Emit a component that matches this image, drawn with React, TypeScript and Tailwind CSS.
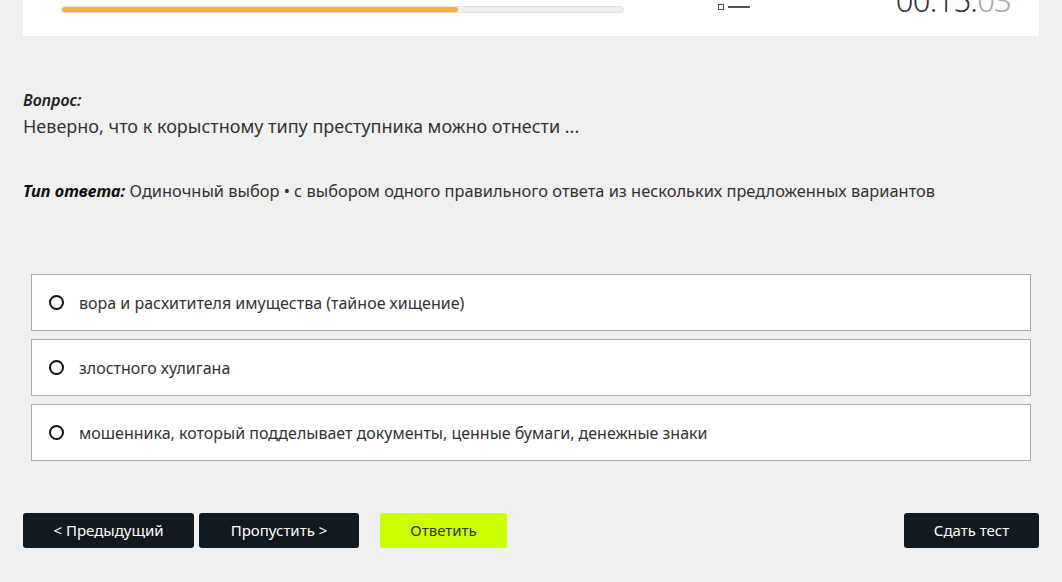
import React, { useState } from 'react';

const options = [
    'вора и расхитителя имущества (тайное хищение)',
    'злостного хулигана',
    'мошенника, который подделывает документы, ценные бумаги, денежные знаки',
];

const App: React.FC = () => {
    const [selected, setSelected] = useState<number | null>(null);
    const progress = 70.5;

    return (
        <div className="min-h-screen bg-[#f0f0f0] px-[23px] text-[#333] font-['Noto_Sans',sans-serif] overflow-hidden">
            {/* top card, page is scrolled so only the bottom part shows */}
            <div className="-mt-[46px] h-[82px] bg-white flex items-start pt-[52px] pl-[38px] pr-[28px]">
                <div className="w-[563px] h-[7px] rounded-full bg-[#eeeeee] border border-[#e0e0e0] overflow-hidden">
                    <div className="h-full bg-[#f3ae45] rounded-full" style={{ width: `${progress}%` }} />
                </div>
                <div className="ml-[94px] -mt-[2px] flex items-center gap-[4px]">
                    <span className="w-[6px] h-[6px] border border-[#555]" />
                    <span className="w-[22px] h-[2px] bg-[#555]" />
                </div>
                <div className="ml-auto -mt-[21px] text-[31px] font-light leading-none text-[#333] tracking-tight">
                    00:15:<span className="text-[#aaa]">03</span>
                </div>
            </div>

            <div className="mt-[54px]">
                <p className="text-[16px] italic font-semibold text-[#222] leading-5">Вопрос:</p>
                <p className="mt-[4px] text-[18px] leading-6 text-[#333]">Неверно, что к корыстному типу преступника можно отнести ...</p>
            </div>

            <p className="mt-[41px] text-[16.4px] leading-6 text-[#333]">
                <span className="italic font-bold text-[#111]">Тип ответа:</span> Одиночный выбор • с выбором одного правильного ответа из нескольких предложенных вариантов
            </p>

            <div className="mt-[71px] mx-[8px] flex flex-col gap-[8px]">
                {options.map((text, i) => (
                    <button
                        key={i}
                        onClick={() => setSelected(i)}
                        className="h-[57px] bg-white border border-[#aaaaaa] flex items-center pl-[17px] text-left"
                    >
                        <span className="w-[15px] h-[15px] rounded-full border-2 border-[#111] flex items-center justify-center">
                            {selected === i && <span className="w-[7px] h-[7px] rounded-full bg-[#111]" />}
                        </span>
                        <span className="ml-[15px] text-[16px] text-[#333]">{text}</span>
                    </button>
                ))}
            </div>

            <div className="mt-[52px] flex items-center">
                <button className="w-[171px] h-[35px] rounded-[3px] bg-[#121a21] text-white text-[15px]">&lt; Предыдущий</button>
                <button className="ml-[5px] w-[160px] h-[35px] rounded-[3px] bg-[#121a21] text-white text-[15px]">Пропустить &gt;</button>
                <button className="ml-[21px] w-[127px] h-[35px] rounded-[3px] bg-[#ccff00] text-[#333] text-[15px]">Ответить</button>
                <button className="ml-auto w-[135px] h-[35px] rounded-[3px] bg-[#121a21] text-white text-[15px]">Сдать тест</button>
            </div>
        </div>
    );
};

export default App;
